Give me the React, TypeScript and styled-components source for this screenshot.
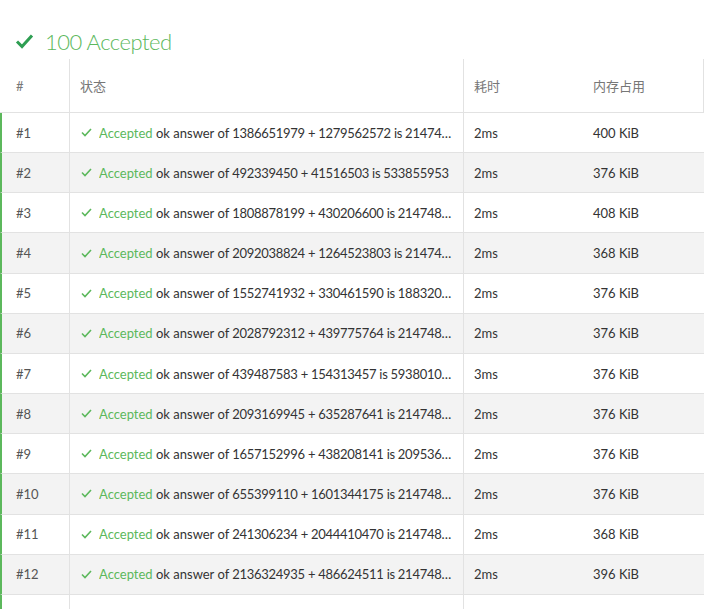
import React from "react";
import styled, { createGlobalStyle } from "styled-components";

const Global = createGlobalStyle`
  html, body { margin: 0; padding: 0; background: #fff; }
  body { font-family: "Segoe UI", "Lato", "Noto Sans CJK SC", sans-serif; color: #333; }
`;

const Page = styled.div`
  width: 704px;
  overflow: hidden;
`;

const Title = styled.div`
  display: flex;
  align-items: center;
  height: 59px;
  padding: 23px 0 0 15px;
  box-sizing: border-box;
  gap: 11px;
  color: #5cb85c;
  font-size: 22px;
  letter-spacing: -0.5px;
  font-family: "Segoe UI", "Lato", sans-serif;
  font-weight: 300;
  svg { flex: none; }
`;

const Table = styled.div`
  display: grid;
  grid-template-columns: 69px 394px 120px 121px;
  border-right: 1px solid #e2e2e2;
`;

const HeadCell = styled.div<{ $first?: boolean; $noLine?: boolean }>`
  height: 54px;
  box-sizing: border-box;
  display: flex;
  align-items: center;
  padding-left: ${(p) => (p.$first ? "16px" : "10px")};
  border-left: ${(p) => (p.$first || p.$noLine ? "none" : "1px solid #e2e2e2")};
  border-bottom: 1px solid #e2e2e2;
  color: #777;
  font-size: 13px;
  font-family: "Segoe UI", "Lato", "Noto Sans CJK SC", sans-serif;
`;

const Cell = styled.div<{ $first?: boolean; $alt?: boolean; $noLine?: boolean }>`
  height: 40.17px;
  box-sizing: border-box;
  display: flex;
  align-items: center;
  padding-left: ${(p) => (p.$first ? "16px" : "10px")};
  padding-right: 10px;
  border-left: ${(p) =>
    p.$first ? "2px solid #5cb85c" : p.$noLine ? "none" : "1px solid #e2e2e2"};
  border-bottom: 1px solid #e2e2e2;
  background: ${(p) => (p.$alt ? "#f3f3f3" : "#fff")};
  font-size: 13px;
  color: #333;
  white-space: nowrap;
  overflow: hidden;
  min-width: 0;
`;

const NumText = styled.span`
  color: #555;
  margin-left: -2px;
`;

const StatusText = styled.span`
  overflow: hidden;
  text-overflow: ellipsis;
  white-space: nowrap;
  min-width: 0;
`;

const Digits = styled.span`
  letter-spacing: -0.28px;
`;

const Ok = styled.span`
  color: #5cb85c;
`;

const SmallCheck = styled.svg`
  flex: none;
  margin-right: 7px;
  margin-left: 1px;
`;

const rows = [
  ["1386651979 + 1279562572 is 2147483647", "2ms", "400 KiB"],
  ["492339450 + 41516503 is 533855953", "2ms", "376 KiB"],
  ["1808878199 + 430206600 is 2147483647", "2ms", "408 KiB"],
  ["2092038824 + 1264523803 is 2147483647", "2ms", "368 KiB"],
  ["1552741932 + 330461590 is 1883203522", "2ms", "376 KiB"],
  ["2028792312 + 439775764 is 2147483647", "2ms", "376 KiB"],
  ["439487583 + 154313457 is 593801040", "3ms", "376 KiB"],
  ["2093169945 + 635287641 is 2147483647", "2ms", "376 KiB"],
  ["1657152996 + 438208141 is 2095361137", "2ms", "376 KiB"],
  ["655399110 + 1601344175 is 2147483647", "2ms", "376 KiB"],
  ["241306234 + 2044410470 is 2147483647", "2ms", "368 KiB"],
  ["2136324935 + 486624511 is 2147483647", "2ms", "396 KiB"],
];

export default function App() {
  return (
    <Page>
      <Global />
      <Title>
        <svg width="19" height="16" viewBox="0 0 19 16">
          <path d="M2 8.5 L7 13.5 L17 2.5" fill="none" stroke="#2e9e52" strokeWidth="3" />
        </svg>
        <span>100 Accepted</span>
      </Title>
      <Table>
        <HeadCell $first>#</HeadCell>
        <HeadCell>状态</HeadCell>
        <HeadCell>耗时</HeadCell>
        <HeadCell $noLine>内存占用</HeadCell>
        {rows.map((r, i) => {
          const alt = i % 2 === 1;
          return (
            <React.Fragment key={i}>
              <Cell $first $alt={alt}>
                <NumText>#{i + 1}</NumText>
              </Cell>
              <Cell $alt={alt}>
                <SmallCheck width="11" height="9" viewBox="0 0 11 9">
                  <path d="M1 4.5 L4 7.5 L10 1" fill="none" stroke="#5cb85c" strokeWidth="1.6" />
                </SmallCheck>
                <StatusText>
                  <Ok>Accepted</Ok> ok answer of <Digits>{r[0]}</Digits>
                </StatusText>
              </Cell>
              <Cell $alt={alt}>{r[1]}</Cell>
              <Cell $alt={alt} $noLine>{r[2]}</Cell>
            </React.Fragment>
          );
        })}
        <Cell $first />
        <Cell />
        <Cell />
        <Cell $noLine />
      </Table>
    </Page>
  );
}
